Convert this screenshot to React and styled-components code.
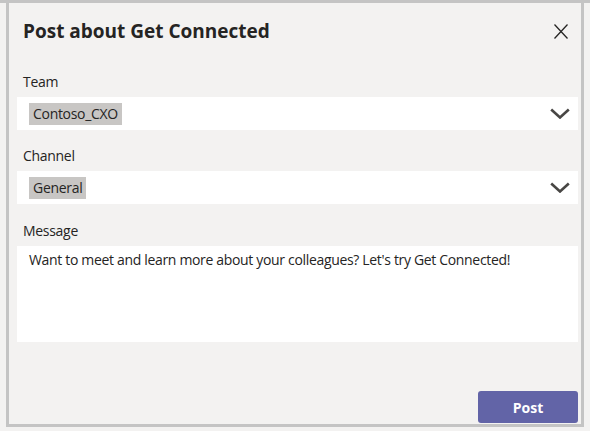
import React from "react";
import styled, { createGlobalStyle } from "styled-components";

const Global = createGlobalStyle`
  html, body { margin: 0; padding: 0; }
  body {
    background: #f3f2f1;
    font-family: "Open Sans", "Noto Sans", sans-serif;
    color: #252423;
  }
  * { box-sizing: border-box; }
`;

const TopRule = styled.div`
  height: 3px;
  background: #c4c4c4;
`;

const Frame = styled.div`
  margin: 0 6px;
  height: 424px;
  border: 3px solid #c4c4c4;
  border-top: none;
  padding: 0 3px 0 8px;
  display: flex;
  flex-direction: column;
`;

const Header = styled.div`
  display: flex;
  align-items: center;
  justify-content: space-between;
  padding: 12px 10px 0 6px;
  height: 44px;
`;

const Title = styled.h1`
  margin: 0;
  font-size: 19px;
  line-height: 28px;
  font-weight: 700;
  color: #252423;
`;

const CloseButton = styled.button`
  border: none;
  background: transparent;
  padding: 0;
  width: 14px;
  height: 15px;
  display: flex;
  cursor: pointer;
`;

const Label = styled.div`
  margin: ${(p) => p.$top}px 0 5px 6px;
  font-size: 14px;
  line-height: 20px;
  letter-spacing: -0.3px;
  color: #252423;
`;

const SelectBox = styled.div`
  height: 33px;
  background: #ffffff;
  display: flex;
  align-items: center;
  justify-content: space-between;
  padding: 0 8px 0 12px;
`;

const Chip = styled.span`
  background: #c8c6c4;
  height: 22px;
  line-height: 22px;
  padding: 0 4px;
  font-size: 14px;
  letter-spacing: -0.3px;
  color: #252423;
`;

const MessageBox = styled.div`
  height: 96px;
  background: #ffffff;
  padding: 4px 12px;
  font-size: 14px;
  line-height: 20px;
  letter-spacing: -0.33px;
  color: #252423;
`;

const PostButton = styled.button`
  margin-top: auto;
  margin-bottom: 1px;
  align-self: flex-end;
  width: 100px;
  height: 32px;
  border: none;
  border-radius: 3px;
  background: #6264a7;
  color: #ffffff;
  font-family: inherit;
  font-size: 14px;
  font-weight: 700;
  cursor: pointer;
`;

const Chevron = () => (
  <svg width="20" height="11" viewBox="0 0 20 11" fill="none">
    <path d="M1.2 1.5 L10 9.5 L18.8 1.5" stroke="#484644" strokeWidth="2.6" />
  </svg>
);

const CloseIcon = () => (
  <svg width="14" height="15" viewBox="0 0 14 15" fill="none">
    <path d="M0.5 0.5 L13.5 14.5 M13.5 0.5 L0.5 14.5" stroke="#252423" strokeWidth="1.3" />
  </svg>
);

export default function App() {
  return (
    <>
      <Global />
      <TopRule />
      <Frame>
        <Header>
          <Title>Post about Get Connected</Title>
          <CloseButton aria-label="Close">
            <CloseIcon />
          </CloseButton>
        </Header>
        <Label $top={25}>Team</Label>
        <SelectBox>
          <Chip>Contoso_CXO</Chip>
          <Chevron />
        </SelectBox>
        <Label $top={16}>Channel</Label>
        <SelectBox>
          <Chip>General</Chip>
          <Chevron />
        </SelectBox>
        <Label $top={17}>Message</Label>
        <MessageBox>
          Want to meet and learn more about your colleagues? Let's try Get Connected!
        </MessageBox>
        <PostButton>Post</PostButton>
      </Frame>
    </>
  );
}
